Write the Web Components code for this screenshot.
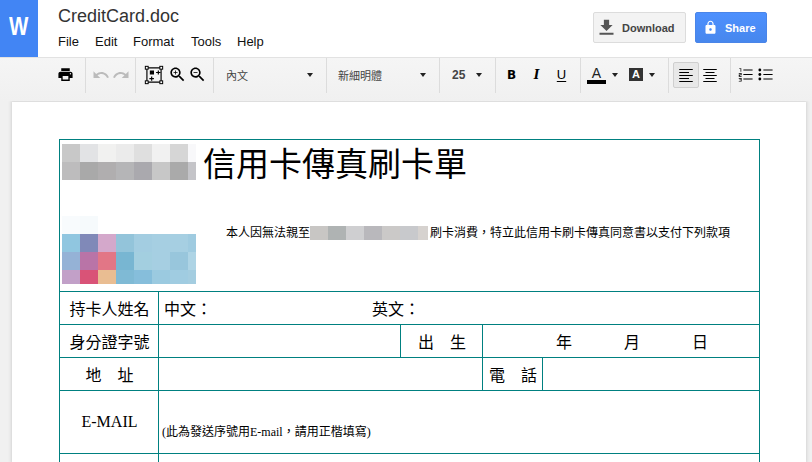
<!DOCTYPE html>
<html lang="zh-Hant">
<head>
<meta charset="utf-8">
<title>CreditCard.doc</title>
<style>
  html, body { margin: 0; height: 100%; overflow: hidden; background: #f0f0f0; }
  body { display: flex; flex-direction: column; font-family: "Liberation Sans", "Noto Sans CJK TC", sans-serif; }
</style>
</head>
<body>
<doc-header name="CreditCard.doc"></doc-header>
<doc-toolbar></doc-toolbar>
<doc-page><credit-form></credit-form></doc-page>

<script>
// Icon paths, all on a 24x24 grid
const ICONS = {
  print: '<path d="M19 8H5c-1.66 0-3 1.34-3 3v6h4v4h12v-4h4v-6c0-1.66-1.34-3-3-3zm-3 11H8v-5h8v5zm3-7c-.55 0-1-.45-1-1s.45-1 1-1 1 .45 1 1-.45 1-1 1zm-1-9H6v4h12V3z"/>',
  undo: '<path d="M12.5 8c-2.65 0-5.05.99-6.9 2.6L2 7v9h9l-3.62-3.62c1.39-1.16 3.16-1.88 5.12-1.88 3.54 0 6.55 2.31 7.6 5.5l2.37-.78C21.08 11.03 17.15 8 12.5 8z"/>',
  redo: '<path d="M18.4 10.6C16.55 8.99 14.15 8 11.5 8c-4.65 0-8.58 3.03-9.96 7.22L3.9 16c1.05-3.19 4.05-5.5 7.6-5.5 1.95 0 3.73.72 5.12 1.88L13 16h9V7l-3.6 3.6z"/>',
  fit: '<path d="M3.5 3.5h17v17h-17z" fill="none" stroke="currentColor" stroke-width="1.4"/><g fill="#fff" stroke="currentColor" stroke-width="1.2"><rect x="1.6" y="1.6" width="3.4" height="3.4"/><rect x="19" y="1.6" width="3.4" height="3.4"/><rect x="1.6" y="19" width="3.4" height="3.4"/><rect x="19" y="19" width="3.4" height="3.4"/></g><path d="M7 6.5h5v5H7zM14.5 8.3h2V6.5h1.4v1.8h2v1.4h-2v1.8h-1.4V9.7h-2zM6.5 15.7h2v-1.8h1.4v1.8h2v1.4h-2v1.8H8.500v-1.800h-2z"/>',
  zoomin: '<path d="M15.5 14h-.79l-.28-.27C15.41 12.59 16 11.11 16 9.5 16 5.91 13.09 3 9.500 3S3 5.910 3 9.500 5.910 16 9.500 16c1.610 0 3.090-.590 4.230-1.570l.270.280v.790l5 4.990L20.490 19l-4.990-5zm-6 0C7.010 14 5 11.990 5 9.500S7.010 5 9.500 5 14 7.010 14 9.500 11.990 14 9.500 14z"/><path d="M12 10h-2v2H9v-2H7V9h2V7h1v2h2v1z"/>',
  zoomout: '<path d="M15.5 14h-.79l-.28-.27C15.41 12.59 16 11.11 16 9.5 16 5.91 13.09 3 9.500 3S3 5.910 3 9.500 5.910 16 9.500 16c1.610 0 3.090-.590 4.230-1.570l.270.280v.790l5 4.990L20.490 19l-4.990-5zm-6 0C7.010 14 5 11.990 5 9.500S7.010 5 9.500 5 14 7.010 14 9.500 11.990 14 9.500 14z"/><path d="M7 9h5v1H7z"/>',
  download: '<path d="M19 9h-4V3H9v6H5l7 7 7-7zM4 18v2.200h16V18H4z"/>',
  lock: '<path d="M18 8h-1V6c0-2.760-2.240-5-5-5S7 3.240 7 6v2H6c-1.100 0-2 .9-2 2v10c0 1.100.9 2 2 2h12c1.100 0 2-.9 2-2V10c0-1.100-.9-2-2-2zm-6 9c-1.100 0-2-.9-2-2s.9-2 2-2 2 .9 2 2-.9 2-2 2zm3.100-9H8.900V6c0-1.710 1.390-3.100 3.100-3.100 1.710 0 3.100 1.390 3.100 3.100v2z"/>',
  left: '<path d="M3 4h18v1.300H3zM3 8h13v1.300H3zM3 12h18v1.300H3zM3 16h13v1.300H3zM3 20h18v1.300H3z"/>',
  center: '<path d="M3 4h18v1.300H3zM6 8h12v1.300H6zM3 12h18v1.300H3zM6 16h12v1.300H6zM3 20h18v1.300H3z"/>',
  numbered: '<path d="M9 5h13v1.400H9zM9 11.300h13v1.400H9zM9 17.600h13v1.400H9z"/><path d="M3 3h3v5H5V4H3zM2.500 10h4v3.200H4v1h2.500v1h-4v-3.100H5.500v-1h-3zM2.500 17h4v5h-4v-1h3v-1H3.500v-1h2v-1h-3z"/>',
  bullets: '<path d="M9 5h13v1.400H9zM9 11.300h13v1.400H9zM9 17.600h13v1.400H9z"/><circle cx="4" cy="5.700" r="2"/><circle cx="4" cy="12" r="2"/><circle cx="4" cy="18.300" r="2"/>'
};

class DocIcon extends HTMLElement {
  constructor() {
    super();
    this.attachShadow({ mode: 'open' });
    const size = this.getAttribute('size') || 18;
    this.shadowRoot.innerHTML = `
      <style>
        :host { display: block; flex: none; width: ${size}px; height: ${size}px; color: ${this.getAttribute('color') || '#000'}; }
        svg { display: block; width: 100%; height: 100%; fill: currentColor; }
      </style>
      <svg viewBox="0 0 24 24">${ICONS[this.getAttribute('name')] || ''}</svg>`;
  }
}

// Pixelated block standing in for a blurred part of the scan
class PixelMosaic extends HTMLElement {
  constructor() {
    super();
    this.attachShadow({ mode: 'open' });
    const rows = JSON.parse(this.getAttribute('rows'));
    const columns = this.getAttribute('columns');
    const heights = this.getAttribute('heights');
    const cells = rows.flat().map(c => `<i style="background:${c}"></i>`).join('');
    this.shadowRoot.innerHTML = `
      <style>
        :host { display: grid; flex: none; grid-template-columns: ${columns}; grid-template-rows: ${heights}; }
      </style>
      ${cells}`;
  }
}

class DocHeader extends HTMLElement {
  constructor() {
    super();
    this.attachShadow({ mode: 'open' });
    this.shadowRoot.innerHTML = `
      <style>
        :host { display: flex; flex: none; height: 57px; background: #fff; font-family: "Liberation Sans", Arial, sans-serif; }
        .logo {
          width: 38px; display: flex; align-items: center; justify-content: center;
          background: #4285f4; color: #fff; font-size: 25px; font-weight: 700; padding-bottom: 5px; box-sizing: border-box;
        }
        .logo span { display: block; transform: scaleX(.82); }
        .info { margin-left: 20px; padding-top: 5px; }
        .name { font-size: 18px; line-height: 22px; color: #333; }
        nav { display: flex; margin-top: 7px; font-size: 13px; line-height: 15px; color: #111; }
        nav span:nth-child(1) { width: 37px; }
        nav span:nth-child(2) { width: 38px; }
        nav span:nth-child(3) { width: 58px; }
        nav span:nth-child(4) { width: 46px; }
        .actions { margin-left: auto; margin-right: 45px; padding-top: 12px; display: flex; gap: 9px; align-items: flex-start; }
        .btn {
          box-sizing: border-box; height: 31px; border-radius: 2px; display: flex; align-items: center;
          font-size: 11px; font-weight: 700;
        }
        .download { width: 93px; padding-left: 2px; gap: 5px; background: #f3f3f3; border: 1px solid #dcdcdc; color: #444; }
        .share { width: 72px; padding-left: 6.5px; gap: 7.5px; background: linear-gradient(#4d90fe, #4787ed); border: 1px solid #4a85e8; color: #fff; }
      </style>
      <div class="logo"><span>W</span></div>
      <div class="info">
        <div class="name">${this.getAttribute('name')}</div>
        <nav><span>File</span><span>Edit</span><span>Format</span><span>Tools</span><span>Help</span></nav>
      </div>
      <div class="actions">
        <div class="btn download"><doc-icon name="download" size="21" color="#555"></doc-icon>Download</div>
        <div class="btn share"><doc-icon name="lock" size="15" color="#fff"></doc-icon>Share</div>
      </div>`;
  }
}

class DocToolbar extends HTMLElement {
  constructor() {
    super();
    this.attachShadow({ mode: 'open' });
    this.shadowRoot.innerHTML = `
      <style>
        :host {
          display: flex; flex: none; height: 44px; box-sizing: border-box; align-items: flex-start;
          background: linear-gradient(#f5f5f5, #f0f0f0); border-top: 1px solid #e2e2e2;
          font-family: "Liberation Sans", "Noto Sans CJK TC", sans-serif;
          color: #444; font-size: 11px;
        }
        .group {
          box-sizing: border-box; height: 35px; padding-bottom: 2px; display: flex; align-items: center; flex: none;
          border-right: 1px solid #dcdcdc;
        }
        .select { justify-content: space-between; }
        .caret { width: 0; height: 0; border: 3px solid transparent; border-top: 4px solid #222; border-bottom: 0; flex: none; }
        .fmt { font-size: 12px; color: #000; font-weight: 700; width: 25px; text-align: center; }
        .bold { font-family: "DejaVu Sans", sans-serif; }
        .italic { font-family: "DejaVu Serif", serif; font-style: italic; }
        .under { font-size: 13px; font-weight: 400; text-decoration: underline; text-underline-offset: 2px; }
        .active { width: 26px; height: 26px; box-sizing: border-box; display: flex; align-items: center; justify-content: center; background: #e8e8e8; border: 1px solid #cfcfcf; border-radius: 2px; }
        .color { font-size: 14px; color: #222; width: 19px; border-bottom: 4px solid #000; text-align: center; line-height: 14px; }
        .box { width: 14px; height: 13px; background: #333; color: #fff; font-size: 11px; font-weight: 700; text-align: center; line-height: 13px; }
      </style>
      <div class="group" style="width:86px;padding-left:57px"><doc-icon name="print" size="17"></doc-icon></div>
      <div class="group" style="width:50px;padding-left:6px;gap:2px"><doc-icon name="undo" size="18" color="#bbb"></doc-icon><doc-icon name="redo" size="18" color="#bbb"></doc-icon></div>
      <div class="group" style="width:78px;padding-left:8px;gap:1px"><doc-icon name="fit" size="20"></doc-icon><doc-icon name="zoomin" size="19" style="margin-left:3px"></doc-icon><doc-icon name="zoomout" size="19"></doc-icon></div>
      <div class="group select" style="width:113px;padding:0 13px 2px 12px"><span>內文</span><i class="caret"></i></div>
      <div class="group select" style="width:113px;padding:0 13px 2px 11px"><span>新細明體</span><i class="caret"></i></div>
      <div class="group select" style="width:56px;padding:0 13px 2px 12px"><span style="font-size:12px;font-weight:700">25</span><i class="caret"></i></div>
      <div class="group" style="width:85px;padding-left:3px"><span class="fmt bold">B</span><span class="fmt italic">I</span><span class="fmt under">U</span></div>
      <div class="group" style="width:88px;padding-left:6px"><span class="color">A</span><i class="caret" style="margin-left:6px"></i><span class="box" style="margin-left:11px">A</span><i class="caret" style="margin-left:6px"></i></div>
      <div class="group" style="width:62px;padding-left:4px;gap:2px"><span class="active"><doc-icon name="left" size="18"></doc-icon></span><doc-icon name="center" size="18"></doc-icon></div>
      <div class="group" style="border:0;padding-left:6px;gap:3px"><doc-icon name="numbered" size="17"></doc-icon><doc-icon name="bullets" size="17"></doc-icon></div>`;
  }
}

class DocPage extends HTMLElement {
  constructor() {
    super();
    this.attachShadow({ mode: 'open' });
    this.shadowRoot.innerHTML = `
      <style>
        :host { display: block; flex: 1; min-height: 0; overflow: hidden; padding: 1px 6px 0 12px; background: #f0f0f0; }
        .sheet {
          height: 100%; box-sizing: border-box; background: #fff; padding: 37px 0 0 47px;
          box-shadow: 0 0 3px 1px #d4d4d4; overflow: hidden;
        }
      </style>
      <div class="sheet"><slot></slot></div>`;
  }
}

class CreditForm extends HTMLElement {
  constructor() {
    super();
    this.attachShadow({ mode: 'open' });
    this.shadowRoot.innerHTML = `
      <style>
        :host { display: block; width: 701px; font-family: "Liberation Serif", "Noto Sans CJK TC", serif; color: #000; font-size: 16px; }
        table { border-collapse: separate; border-spacing: 0; table-layout: fixed; width: 701px; border-top: 1px solid #008080; border-left: 1px solid #008080; }
        td { border-right: 1px solid #008080; border-bottom: 1px solid #008080; padding: 0 0 0 1px; text-align: center; }
        td.left { text-align: left; padding-left: 0; }
        td.top { vertical-align: top; padding: 4px 0 0 2px; height: 147px; }
        .line { display: flex; align-items: flex-start; }
        h1 { margin: -2px 0 0 7px; font-size: 33px; font-weight: 400; line-height: 46px; }
        .notice { display: flex; align-items: center; margin: 10px 0 0 30px; font-size: 12px; line-height: 14px; white-space: nowrap; }
        tr.r { height: 33px; }
        td.note { font-size: 12px; text-align: left; vertical-align: bottom; padding: 0 0 13px 3px; line-height: 16px; }
        td.email { padding-bottom: 1px; }
      </style>
      <table>
        <colgroup><col style="width:99px"><col style="width:242px"><col style="width:82px"><col style="width:60px"><col style="width:217px"></colgroup>
        <tr>
          <td colspan="5" class="left top">
            <div class="line">
              <pixel-mosaic columns="repeat(7, 18px) 8px" heights="18px 18px" rows='[["#c8c8c8","#e2e3e5","#f1f1f0","#ebebeb","#dfdfdf","#f1f1f1","#d6d6d6","#f8f8fa"],["#bdbcbd","#a9a9a9","#b0aeaf","#b5b5b7","#aaa9ae","#c7c7c7","#aaaaaa","#c4c4c8"]]'></pixel-mosaic>
              <h1>信用卡傳真刷卡單</h1>
            </div>
            <div class="line" style="margin-top:28px">
              <pixel-mosaic columns="repeat(7, 18px) 8px" heights="18px 18px 18px 14px" rows='[["#f8fbfd","#f6fafc","#fff","#fff","#fff","#fff","#fff","#fff"],["#90c6e0","#8089b8","#d4a8cb","#93c4da","#a3cde1","#a6cfe2","#a6cfe2","#9fcbe0"],["#95b2d6","#b974a7","#e27686","#78b6d2","#a3cfe0","#a6cfe2","#98c6dc","#aed4e5"],["#c2a0c8","#d95377","#e9bd92","#7fbad5","#86bedb","#9bcae0","#a0cce1","#a4cde0"]]'></pixel-mosaic>
              <div class="notice">本人因無法親至<pixel-mosaic columns="repeat(6, 18px) 10px" heights="14px" rows='[["#c8c6c4","#afb3b3","#cfcfd1","#b9b8bc","#cbc9c8","#c8c9cc","#d6d2cf"]]'></pixel-mosaic><span style="margin-left:2px">刷卡消費，特立此信用卡刷卡傳真同意書以支付下列款項</span></div>
            </div>
          </td>
        </tr>
        <tr class="r">
          <td>持卡人姓名</td>
          <td colspan="4" class="left"><div style="display:flex;padding-left:5px"><span style="width:208px">中文：</span><span>英文：</span></div></td>
        </tr>
        <tr class="r">
          <td>身分證字號</td>
          <td></td>
          <td>出　生</td>
          <td colspan="2" class="left"><div style="display:flex;padding-left:73px;gap:52px"><span>年</span><span>月</span><span>日</span></div></td>
        </tr>
        <tr class="r">
          <td>地　址</td>
          <td colspan="2"></td>
          <td>電　話</td>
          <td></td>
        </tr>
        <tr style="height:63px">
          <td class="email">E-MAIL</td>
          <td colspan="4" class="note">(此為發送序號用E-mail，請用正楷填寫)</td>
        </tr>
        <tr style="height:60px"><td></td><td colspan="4"></td></tr>
      </table>`;
  }
}

customElements.define('doc-icon', DocIcon);
customElements.define('pixel-mosaic', PixelMosaic);
customElements.define('doc-header', DocHeader);
customElements.define('doc-toolbar', DocToolbar);
customElements.define('doc-page', DocPage);
customElements.define('credit-form', CreditForm);
</script>
</body>
</html>
